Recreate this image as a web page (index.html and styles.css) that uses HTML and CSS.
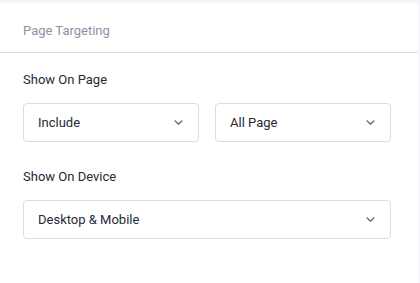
FILE: index.html
```html
<!DOCTYPE html>
<html lang="en">
<head>
    <meta charset="UTF-8">
    <meta name="viewport" content="width=device-width, initial-scale=1.0">
    <title>Page Targeting</title>
    <link rel="stylesheet" href="styles.css">
</head>
<body>
    <div class="card">
        <div class="card-header">Page Targeting</div>
        <div class="card-body">
            <label class="field-label">Show On Page</label>
            <div class="row">
                <div class="select">
                    <span>Include</span>
                    <svg class="chevron" width="9" height="5" viewBox="0 0 9 5"><path d="M1 0.8l3.5 3.4 3.5-3.4" fill="none" stroke="#5b6472" stroke-width="1.2" stroke-linecap="round" stroke-linejoin="round"/></svg>
                </div>
                <div class="select">
                    <span>All Page</span>
                    <svg class="chevron" width="9" height="5" viewBox="0 0 9 5"><path d="M1 0.8l3.5 3.4 3.5-3.4" fill="none" stroke="#5b6472" stroke-width="1.2" stroke-linecap="round" stroke-linejoin="round"/></svg>
                </div>
            </div>

            <label class="field-label">Show On Device</label>
            <div class="row">
                <div class="select">
                    <span>Desktop &amp; Mobile</span>
                    <svg class="chevron" width="9" height="5" viewBox="0 0 9 5"><path d="M1 0.8l3.5 3.4 3.5-3.4" fill="none" stroke="#5b6472" stroke-width="1.2" stroke-linecap="round" stroke-linejoin="round"/></svg>
                </div>
            </div>
        </div>
    </div>
</body>
</html>
```

FILE: styles.css
```css
body {
    font-family: Roboto, "Noto Sans", sans-serif;
    background-color: #f4f6fa;
    margin: 0;
    height: 283px;
    overflow: hidden;
}
.card {
    background: #fff;
    margin: 3px 2px 0 0;
    border-top-right-radius: 5px;
    height: 280px;
}
.card-header {
    height: 50px;
    box-sizing: border-box;
    padding: 20px 23px 0;
    font-size: 13px;
    color: #8a93a3;
    border-bottom: 1px solid #dcdcde;
}
.card-body {
    padding: 19px 27px 0 23px;
}
.field-label {
    display: block;
    font-size: 13px;
    color: #262b35;
    margin-bottom: 16px;
}
.row {
    display: flex;
    gap: 16px;
    margin-bottom: 27px;
}
.select {
    flex: 1;
    height: 39px;
    box-sizing: border-box;
    border: 1px solid #dcdcde;
    border-radius: 4px;
    padding: 0 14px 0 14px;
    display: flex;
    align-items: center;
    justify-content: space-between;
    font-size: 13px;
    color: #262b35;
}
.chevron {
    margin-right: 1px;
}
```
